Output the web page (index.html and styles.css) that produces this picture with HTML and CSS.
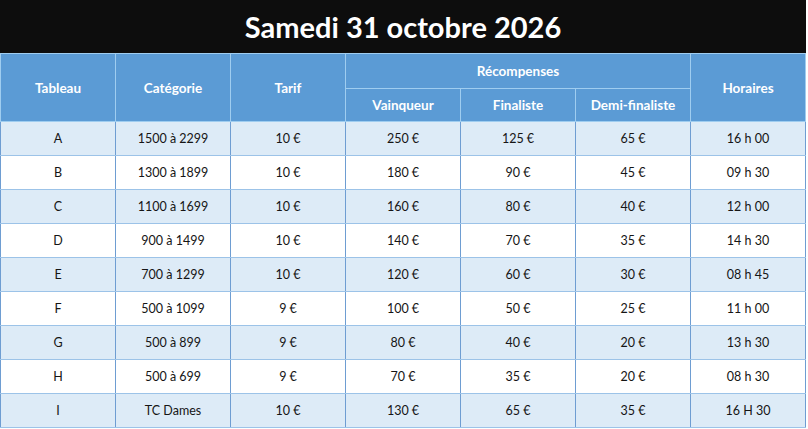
FILE: index.html
```html
<!DOCTYPE html>
<html lang="fr">
<head>
<meta charset="utf-8">
<title>Samedi 31 octobre 2026</title>
<link rel="stylesheet" href="styles.css">
</head>
<body>
<div class="sheet">
  <div class="title">Samedi 31 octobre 2026</div>
  <table class="grid">
    <colgroup>
      <col class="c"><col class="c"><col class="c"><col class="c"><col class="c"><col class="c"><col class="c">
    </colgroup>
    <thead>
      <tr class="h1">
        <th rowspan="2">Tableau</th>
        <th rowspan="2">Catégorie</th>
        <th rowspan="2">Tarif</th>
        <th colspan="3">Récompenses</th>
        <th rowspan="2">Horaires</th>
      </tr>
      <tr class="h2">
        <th>Vainqueur</th>
        <th>Finaliste</th>
        <th>Demi-finaliste</th>
      </tr>
    </thead>
    <tbody>
      <tr class="alt"><td>A</td><td>1500 à 2299</td><td>10 €</td><td>250 €</td><td>125 €</td><td>65 €</td><td>16 h 00</td></tr>
      <tr><td>B</td><td>1300 à 1899</td><td>10 €</td><td>180 €</td><td>90 €</td><td>45 €</td><td>09 h 30</td></tr>
      <tr class="alt"><td>C</td><td>1100 à 1699</td><td>10 €</td><td>160 €</td><td>80 €</td><td>40 €</td><td>12 h 00</td></tr>
      <tr><td>D</td><td>900 à 1499</td><td>10 €</td><td>140 €</td><td>70 €</td><td>35 €</td><td>14 h 30</td></tr>
      <tr class="alt"><td>E</td><td>700 à 1299</td><td>10 €</td><td>120 €</td><td>60 €</td><td>30 €</td><td>08 h 45</td></tr>
      <tr><td>F</td><td>500 à 1099</td><td>9 €</td><td>100 €</td><td>50 €</td><td>25 €</td><td>11 h 00</td></tr>
      <tr class="alt"><td>G</td><td>500 à 899</td><td>9 €</td><td>80 €</td><td>40 €</td><td>20 €</td><td>13 h 30</td></tr>
      <tr><td>H</td><td>500 à 699</td><td>9 €</td><td>70 €</td><td>35 €</td><td>20 €</td><td>08 h 30</td></tr>
      <tr class="alt"><td>I</td><td>TC Dames</td><td>10 €</td><td>130 €</td><td>65 €</td><td>35 €</td><td>16 H 30</td></tr>
    </tbody>
  </table>
</div>
</body>
</html>
```

FILE: styles.css
```css
html, body {
  margin: 0;
  padding: 0;
  background: #ffffff;
}

.sheet {
  width: 806px;
  font-family: Lato, "Open Sans", "Liberation Sans", sans-serif;
}

.title {
  height: 53px;
  background: #0d0d0d;
  color: #ffffff;
  font-weight: 700;
  font-size: 29px;
  line-height: 54px;
  text-align: center;
}

.grid {
  width: 806px;
  border-collapse: collapse;
  table-layout: fixed;
}

.grid col.c {
  width: 115px;
}

.grid th {
  background: #5b9bd5;
  color: #ffffff;
  font-weight: 700;
  font-size: 13.5px;
  text-align: center;
  vertical-align: middle;
  padding: 0;
  border: 1px solid #9fcdf0;
}

.grid tr.h1 th {
  height: 34px;
}

.grid tr.h2 th {
  height: 32px;
}

.grid td {
  height: 33px;
  padding: 0;
  text-align: center;
  vertical-align: middle;
  font-size: 12.5px;
  color: #151515;
  background: #ffffff;
  border-top: 1px solid #9cc3e8;
  border-bottom: 1px solid #9cc3e8;
  border-left: 1px solid #6e9dd2;
  border-right: 1px solid #6e9dd2;
}

.grid tr.alt td {
  background: #ddebf7;
}
```
